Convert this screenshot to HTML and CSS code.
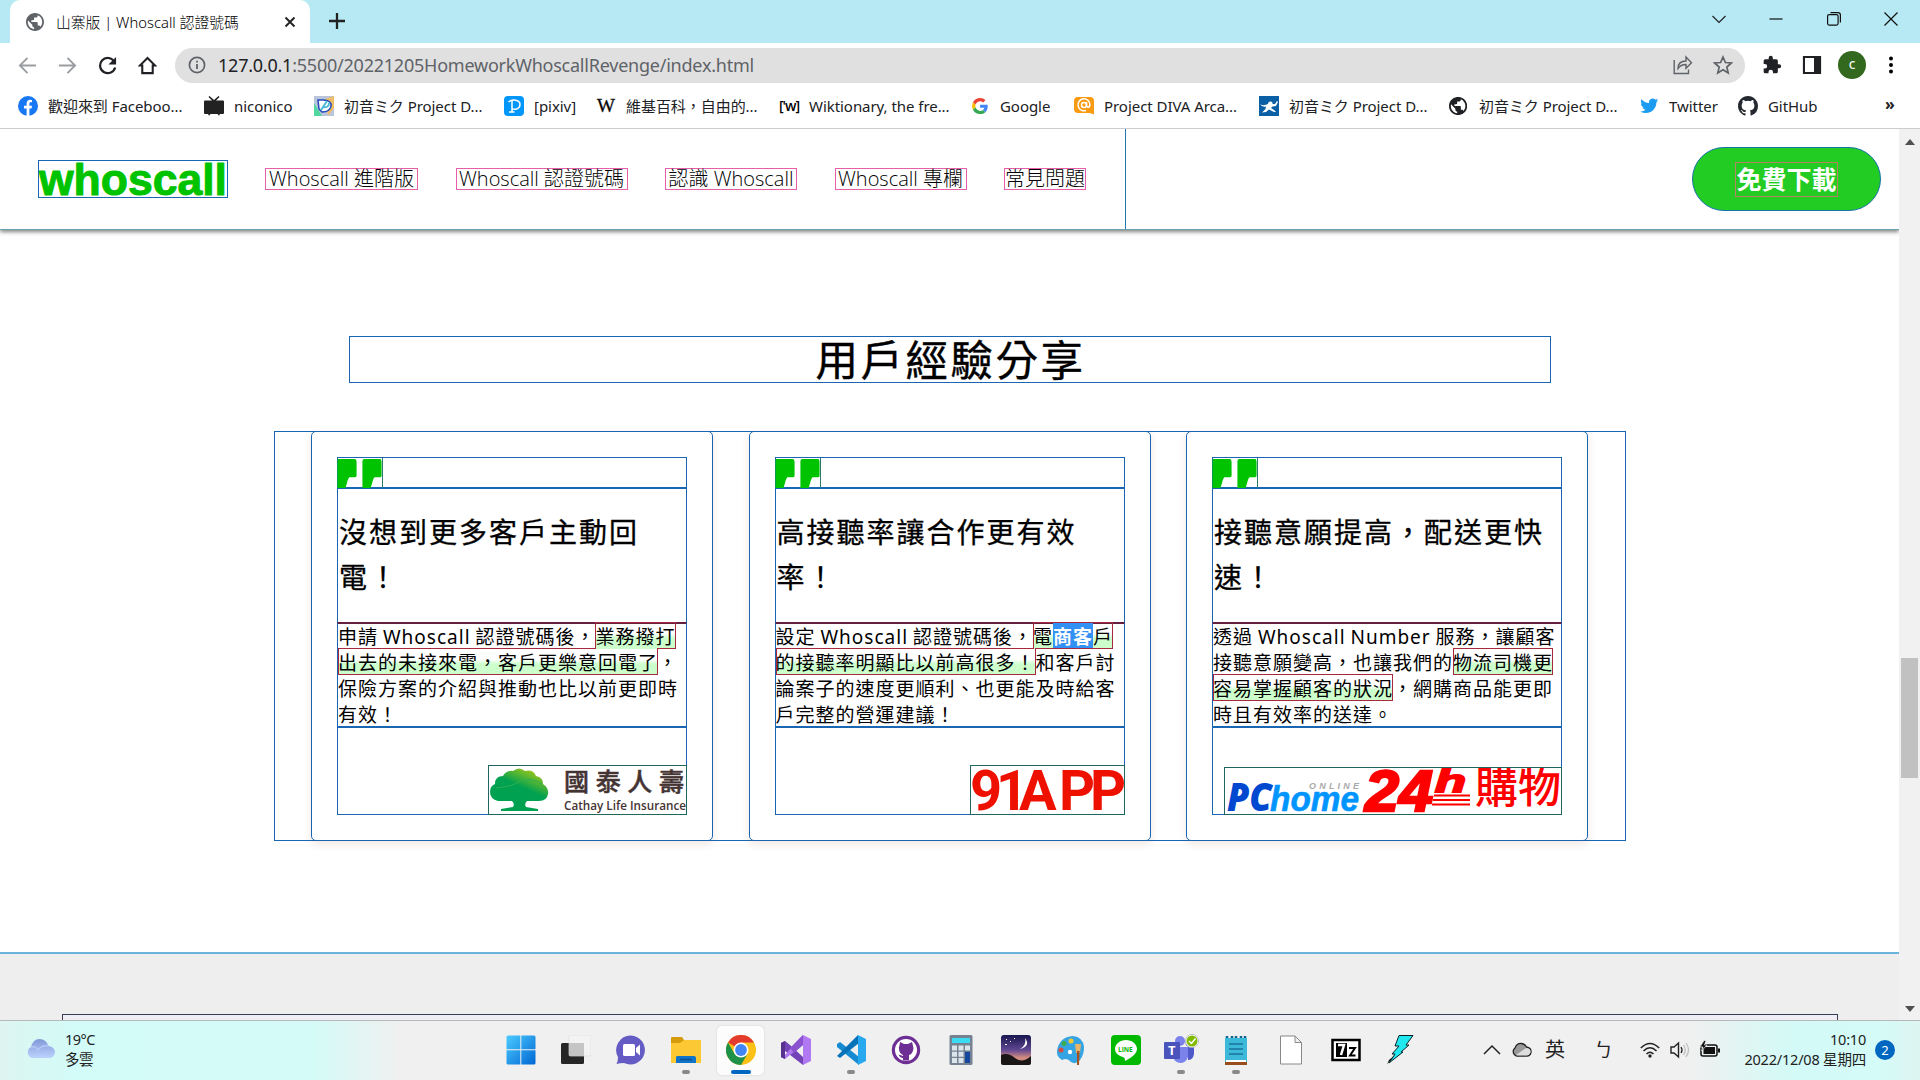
FILE: index.html
```html
<!DOCTYPE html>
<html lang="zh-Hant">
<head>
<meta charset="utf-8">
<title>山寨版 | Whoscall 認證號碼</title>
<link rel="stylesheet" href="styles.css">
</head>
<body>
<svg class="defs" width="0" height="0">
  <symbol id="globe" viewBox="2 2 20 20"><path fill="currentColor" d="M12 2C6.480 2 2 6.480 2 12s4.480 10 10 10 10-4.480 10-10S17.520 2 12 2zm-1 17.930c-3.950-.490-7-3.850-7-7.930 0-.620.080-1.210.210-1.790L9 15v1c0 1.100.9 2 2 2v1.930zm6.900-2.540c-.260-.810-1-1.390-1.900-1.390h-1v-3c0-.550-.450-1-1-1H8v-2h2c.550 0 1-.450 1-1V7h2c1.100 0 2-.9 2-2v-.410c2.930 1.190 5 4.060 5 7.410 0 2.080-.8 3.970-2.100 5.390z"/></symbol>
  <symbol id="quote" viewBox="0 0 46 31"><path d="M1 1H18Q20 1 20 5V18Q20 20 18 20H13Q11.500 20 10 26L8.500 31H0V4Q0 1 1 1ZM28 1H44Q46 1 46 5V18Q46 20 44 20H39Q37.500 20 36 26L34.500 31H26V4Q26 1 28 1Z" fill="#00c300"/></symbol>
</svg>

<div class="tabstrip">
  <div class="tab">
    <svg class="fav" viewBox="0 0 24 24"><use href="#globe"/></svg>
    <span class="tab-title">山寨版 | Whoscall 認證號碼</span>
    <svg class="tab-x" viewBox="0 0 12 12"><path d="M1.500 1.500L10.500 10.500M10.500 1.500L1.500 10.500" stroke="#222" stroke-width="1.900"/></svg>
  </div>
  <svg class="plus" viewBox="0 0 16 16"><path d="M8 0V16M0 8H16" stroke="#222" stroke-width="2.300"/></svg>
  <div class="winctl">
    <svg viewBox="0 0 14 14"><path d="M.5 4L7 10.500L13.500 4" fill="none" stroke="#222" stroke-width="1.200"/></svg>
    <svg viewBox="0 0 14 14"><path d="M.5 7H13.500" stroke="#111" stroke-width="1.200"/></svg>
    <svg viewBox="0 0 14 14"><rect x=".6" y="2.600" width="10.500" height="10.500" rx="1.500" fill="none" stroke="#111" stroke-width="1.200"/><path d="M3.500 .6H11Q13.400 .6 13.400 3V10.500" fill="none" stroke="#111" stroke-width="1.200"/></svg>
    <svg viewBox="0 0 14 14"><path d="M.5 .5L13.500 13.500M13.500 .5L.5 13.500" stroke="#111" stroke-width="1.200"/></svg>
  </div>
</div>

<div class="toolbar">
  <svg class="ti dim" viewBox="0 0 20 20"><path d="M19 10H2M10 2L2 10L10 18" fill="none" stroke="currentColor" stroke-width="2"/></svg>
  <svg class="ti dim" viewBox="0 0 20 20"><path d="M1 10H18M10 2L18 10L10 18" fill="none" stroke="currentColor" stroke-width="2"/></svg>
  <svg class="ti" viewBox="0 0 20 20"><path d="M16.800 5.500A8 8 0 1 0 18 12" fill="none" stroke="currentColor" stroke-width="2.300"/><path d="M19 1V9H11Z" fill="currentColor"/></svg>
  <svg class="ti" viewBox="0 0 20 20"><path d="M10 2L18 10H15.500V18H4.500V10H2Z" fill="none" stroke="currentColor" stroke-width="2.200"/></svg>
  <div class="omnibox">
    <svg class="info" viewBox="0 0 18 18"><circle cx="9" cy="9" r="7.600" fill="none" stroke="#5f6368" stroke-width="1.700"/><path d="M9 8V13M9 4.700V6.500" stroke="#5f6368" stroke-width="1.800"/></svg>
    <span class="url"><b>127.0.0.1</b>:5500/20221205HomeworkWhoscallRevenge/index.html</span>
    <svg class="oi" viewBox="0 0 20 20"><path d="M1.200 5V18.500H15.500V14.500M5 13.500C5 8.500 8 6 13 6V2L18.500 7.700L13 13.200V9.500C9.500 9.500 7 10.500 5 13.500Z" fill="none" stroke="#5f6368" stroke-width="1.400"/></svg>
    <svg class="oi" viewBox="0 0 20 20"><path d="M10 2L12.400 7.500L18.300 8L13.800 12L15.200 17.900L10 14.800L4.800 17.900L6.200 12L1.700 8L7.600 7.500Z" fill="none" stroke="#5f6368" stroke-width="1.700"/></svg>
  </div>
  <div class="exts">
    <svg viewBox="0 0 24 24"><path d="M20.500 11H19V7a2 2 0 0 0-2-2h-4V3.500a2.500 2.500 0 0 0-5 0V5H4a2 2 0 0 0-2 2v3.800h1.500a2.700 2.700 0 0 1 0 5.400H2V20a2 2 0 0 0 2 2h3.800v-1.500a2.700 2.700 0 0 1 5.400 0V22H17a2 2 0 0 0 2-2v-4h1.500a2.500 2.500 0 0 0 0-5z" fill="#202124"/></svg>
    <svg viewBox="0 0 20 20"><path d="M2 2H18V18H2Z" fill="#202124" stroke="#202124" stroke-width="2.200"/><rect x="3" y="3" width="9" height="14" fill="#fff"/></svg>
    <span class="avatar">c</span>
    <svg class="dots" viewBox="0 0 20 20"><circle cx="10" cy="3.500" r="2"/><circle cx="10" cy="10" r="2"/><circle cx="10" cy="16.500" r="2"/></svg>
  </div>
</div>

<div class="bookmarks">
  <span class="bm"><svg viewBox="0 0 20 20"><circle cx="10" cy="10" r="10" fill="#1877f2"/><path d="M8.600 20V12.500H6V9.700H8.600V7.600C8.600 5 10 3.700 12.300 3.700L14 3.900V6.300H12.800C11.700 6.300 11.400 7 11.400 7.800V9.700H14L13.500 12.500H11.400V20Z" fill="#fff"/></svg><i>歡迎來到 Faceboo...</i></span>
  <span class="bm"><svg viewBox="0 0 20 20"><path d="M1 4.500H8L4.500 1L5.500 0L10 4L14.500 0L15.500 1L12 4.500H19Q20 4.500 20 5.500V17Q20 18 19 18H16L15 19.800L13.500 18H6.500L5 19.800L4 18H1Q0 18 0 17V5.500Q0 4.500 1 4.500Z" fill="#222"/></svg><i>niconico</i></span>
  <span class="bm"><svg viewBox="0 0 20 20"><rect width="20" height="20" fill="#b9c5dd"/><path d="M0 7L8 20H0Z" fill="#51d7a0"/><path d="M11 3L20 0V12L14 20Z" fill="#eebd68"/><path d="M4 4H10Q18 5 17 10Q16 16 8 16L5 13Z" fill="#fff" stroke="#2349b8" stroke-width="1.500"/><path d="M7 14L13 5M9 11Q15 12 15 7" stroke="#4fb8d8" stroke-width="2" fill="none"/></svg><i>初音ミク Project D...</i></span>
  <span class="bm"><svg viewBox="0 0 20 20"><rect width="20" height="20" rx="4" fill="#0096fa"/><path d="M4.500 6C8 3 16 3.500 16 8.500C16 13.500 10 14 8 12.500M8 5V16M5 16H10.500" stroke="#fff" stroke-width="1.500" fill="none"/></svg><i>[pixiv]</i></span>
  <span class="bm"><b class="serif">W</b><i>維基百科，自由的...</i></span>
  <span class="bm"><b class="wik">['w]</b><i>Wiktionary, the fre...</i></span>
  <span class="bm"><svg viewBox="0 0 48 48"><g transform="translate(5 5) scale(.8)"><path fill="#ea4335" d="M24 9.500c3.500 0 6.700 1.200 9.200 3.600l6.900-6.900C35.900 2.400 30.500 0 24 0 14.600 0 6.500 5.400 2.600 13.200l8 6.200C12.400 13.700 17.700 9.500 24 9.500z"/><path fill="#4285f4" d="M47 24.500c0-1.600-.2-3.100-.4-4.500H24v9h12.900c-.6 3-2.200 5.500-4.800 7.200l7.700 6C44.400 38 47 31.800 47 24.500z"/><path fill="#fbbc05" d="M10.500 28.600c-.5-1.500-.8-3-.8-4.600s.3-3.100.8-4.600l-8-6.200C1 16.500 0 20.100 0 24s.9 7.500 2.600 10.800z"/><path fill="#34a853" d="M24 48c6.500 0 11.900-2.100 15.900-5.800l-7.700-6c-2.200 1.500-4.900 2.300-8.200 2.300-6.300 0-11.600-4.200-13.500-9.900l-8 6.200C6.500 42.600 14.600 48 24 48z"/></g></svg><i>Google</i></span>
  <span class="bm"><svg viewBox="0 0 20 20"><path d="M4 1H16Q20 1 20 5V18.500L16 17H4Q0 17 0 13V5Q0 1 4 1Z" fill="#f89a12"/><circle cx="10" cy="9" r="2.500" fill="none" stroke="#fff" stroke-width="1.500"/><path d="M12.500 6V10Q15 13 16 9A6 6 0 1 0 12 14.500" fill="none" stroke="#fff" stroke-width="1.500"/></svg><i>Project DIVA Arca...</i></span>
  <span class="bm"><svg viewBox="0 0 20 20"><rect width="20" height="20" fill="#0b5fa5"/><path d="M1 8C4 10 6 9 9 8Q9 5 12 5.500Q14 6 13.500 8L16 8L18 5L19 6L17 10L13.500 10.500L12 12L15 14L17 16L15 16L10 13.500L7 16L3 16.500L6.500 13L7 10.500Q3 11.500 1 8Z" fill="#fff"/></svg><i>初音ミク Project D...</i></span>
  <span class="bm"><svg class="dark" viewBox="0 0 22 22"><use href="#globe" x="0" y="1" width="20" height="20"/></svg><i>初音ミク Project D...</i></span>
  <span class="bm"><svg viewBox="0 0 24 24"><path fill="#1d9bf0" d="M23 5.100a9 9 0 0 1-2.500.7 4.400 4.400 0 0 0 1.900-2.400 9 9 0 0 1-2.800 1 4.400 4.400 0 0 0-7.500 4A12.500 12.500 0 0 1 3 3.800a4.400 4.400 0 0 0 1.400 5.900 4.400 4.400 0 0 1-2-.6 4.400 4.400 0 0 0 3.500 4.400 4.400 4.400 0 0 1-2 .1 4.400 4.400 0 0 0 4.100 3A9 9 0 0 1 1.500 18.500a12.500 12.500 0 0 0 6.800 2C16.500 20.500 21 13.700 21 7.300A9 9 0 0 0 23 5.100z"/></svg><i>Twitter</i></span>
  <span class="bm"><svg viewBox="0 0 16 16"><path fill="#24292f" d="M8 0C3.580 0 0 3.580 0 8c0 3.540 2.290 6.530 5.470 7.590.4.070.55-.17.55-.38 0-.19-.01-.82-.01-1.490-2.010.37-2.530-.49-2.690-.94-.09-.23-.48-.94-.82-1.130-.28-.15-.68-.52-.01-.53.63-.01 1.080.58 1.230.82.72 1.210 1.870.87 2.330.66.07-.52.28-.87.51-1.070-1.780-.2-3.640-.89-3.640-3.950 0-.87.31-1.590.82-2.150-.08-.2-.36-1.020.08-2.120 0 0 .67-.21 2.200.82a7.600 7.600 0 0 1 4 0c1.530-1.040 2.200-.82 2.200-.82.44 1.100.16 1.920.08 2.120.51.56.82 1.270.82 2.150 0 3.070-1.870 3.750-3.650 3.950.29.25.54.73.54 1.480 0 1.070-.01 1.930-.01 2.200 0 .21.15.46.55.38A8 8 0 0 0 16 8c0-4.420-3.580-8-8-8z"/></svg><i>GitHub</i></span>
  <b class="more">»</b>
</div>

<div class="viewport">
  <main class="page">
    <header class="site">
      <div class="left">
        <svg class="logo" viewBox="0 0 188 36"><text x="0" y="33.500" textLength="188" lengthAdjust="spacingAndGlyphs">whoscall</text></svg>
        <nav>
          <a>Whoscall 進階版</a><a>Whoscall 認證號碼</a><a>認識 Whoscall</a><a>Whoscall 專欄</a><a>常見問題</a>
        </nav>
      </div>
      <div class="download"><span>免費下載</span></div>
    </header>

    <section class="stories">
      <h2>用戶經驗分享</h2>
      <div class="cards">
        <article>
          <div class="q"><svg viewBox="0 0 46 31"><use href="#quote"/></svg></div>
          <h3>沒想到更多客戶主動回<br>電！</h3>
          <p>申請 Whoscall 認證號碼後，<em>業務撥打<br>出去的未接來電，客戶更樂意回電了</em>，<br>保險方案的介紹與推動也比以前更即時<br>有效！</p>
          <div class="brand">
            <svg width="199" height="50" viewBox="0 0 197 48"><defs><linearGradient id="tree" x1="0" y1="1" x2=".6" y2="0"><stop offset=".65" stop-color="#00a150"/><stop offset="1" stop-color="#8fc31f"/></linearGradient></defs><path d="M9 35Q1 33 1 26Q1 20 6 18Q6 10 14 10Q17 4 24 5Q30 0 36 5Q44 3 47 10Q54 11 54 18Q60 22 59 28Q58 35 50 35H38Q35 38 37 41L49 43V45H12V43L24 41Q26 38 23 35Z" fill="url(#tree)"/><path d="M7 22Q21 21 30 16Q42 10 53 18" stroke="#2db052" stroke-width="1" fill="none"/><text class="ca1" x="75" y="25" textLength="120">國泰人壽</text><text class="ca2" x="75" y="44" textLength="122" lengthAdjust="spacingAndGlyphs">Cathay Life Insurance</text></svg>
          </div>
        </article>
        <article>
          <div class="q"><svg viewBox="0 0 46 31"><use href="#quote"/></svg></div>
          <h3>高接聽率讓合作更有效<br>率！</h3>
          <p>設定 Whoscall 認證號碼後，<em>電<mark>商客</mark>戶<br>的接聽率明顯比以前高很多！</em>和客戶討<br>論案子的速度更順利、也更能及時給客<br>戶完整的營運建議！</p>
          <div class="brand">
            <svg width="155" height="50" viewBox="0 0 153 48"><text class="app" y="43.500" x="-1 25 48 88 119">91APP</text></svg>
          </div>
        </article>
        <article>
          <div class="q"><svg viewBox="0 0 46 31"><use href="#quote"/></svg></div>
          <h3>接聽意願提高，配送更快<br>速！</h3>
          <p>透過 Whoscall Number 服務，讓顧客<br>接聽意願變高，也讓我們的<em>物流司機更<br>容易掌握顧客的狀況</em>，網購商品能更即<br>時且有效率的送達。</p>
          <div class="brand">
            <svg width="338" height="48" viewBox="0 0 336 46"><text class="pc" x="2" y="43" textLength="45" lengthAdjust="spacingAndGlyphs">PC</text><text class="home" x="45" y="43" textLength="89" lengthAdjust="spacingAndGlyphs">home</text><text class="online" x="84" y="21" textLength="50">ONLINE</text><text class="h24" x="140" y="42.500" textLength="68" lengthAdjust="spacingAndGlyphs">24</text><text class="hh" x="210" y="24" textLength="31" lengthAdjust="spacingAndGlyphs">h</text><path d="M209 27.500H245M208 32H245M207 36.500H245" stroke="#f00" stroke-width="1.800"/><text class="gw" x="250" y="35" textLength="86">購物</text></svg>
          </div>
        </article>
      </div>
    </section>
    <section class="gray"><div class="inner"></div></section>
  </main>
  <div class="scroll">
    <svg viewBox="0 0 10 6"><path d="M0 6L5 0L10 6Z"/></svg>
    <div class="thumb"></div>
    <svg viewBox="0 0 10 6"><path d="M0 0L5 6L10 0Z"/></svg>
  </div>
</div>

<footer class="taskbar">
  <div class="weather">
    <svg viewBox="0 0 30 20"><defs><linearGradient id="cl" x1="0" y1="0" x2="0" y2="1"><stop offset="0" stop-color="#8298d8"/><stop offset="1" stop-color="#bcd2fd"/></linearGradient></defs><path d="M7 19A6 6 0 0 1 6 8Q8 0 14.500 0Q21 0 23.500 7Q30 8 30 13.500Q29 19 24 19Z" fill="url(#cl)"/><path d="M6 8Q11 7 13 11Q17 6 23.500 7" fill="none" stroke="#b4c6f4" stroke-width="1.500"/></svg>
    <div class="wt"><span>19°C</span><span>多雲</span></div>
  </div>
  <div class="apps">
    <span class="app-i"><svg viewBox="0 0 30 30"><defs><linearGradient id="win" x1="0" y1="0" x2="1" y2="1"><stop offset="0" stop-color="#4ccbff"/><stop offset="1" stop-color="#0067d4"/></linearGradient></defs><path d="M.5 2Q.5 .5 2 .5H14.300V14.300H.5ZM15.300 .5H28Q29.500 .5 29.500 2V14.300H15.300ZM.5 15.300H14.300V29.500H2Q.5 29.500 .5 28ZM15.300 15.300H29.500V28Q29.500 29.500 28 29.500H15.300Z" fill="url(#win)"/></svg></span>
    <span class="app-i"><svg viewBox="0 0 30 30"><rect x="0" y="8" width="23" height="21" rx="1.500" fill="#262626"/><rect x="8" y="0" width="22" height="21" rx="1.500" fill="#f4f4f4" fill-opacity=".8" stroke="#ddd" stroke-width=".7"/><path d="M8 8H23V21H8Z" fill="#c5c5c5"/></svg></span>
    <span class="app-i"><svg viewBox="0 0 30 30"><path d="M15 .5A14.500 14.500 0 1 1 8 28Q4 28 .5 29Q2 26 2 22A14.500 14.500 0 0 1 15 .5Z" fill="#655bc4"/><rect x="7" y="9" width="12" height="12" rx="1.500" fill="#fff"/><path d="M20 13L24 9.500V20.500L20 17Z" fill="#fff"/></svg></span>
    <span class="app-i run"><svg viewBox="0 0 30 30"><path d="M0 3Q0 2 1 2H11L13 5H15V10H0Z" fill="#d59b0c"/><path d="M0 8H9L13 5H30V28H0Z" fill="#fcc934"/><path d="M5 28V22Q5 21 7 21H23Q25 21 25 23V28Z" fill="#0f74c8"/><path d="M9 24.500H21" stroke="#0b4f92" stroke-width="1.500"/></svg></span>
    <span class="app-i active"><svg viewBox="0 0 30 30"><circle cx="15" cy="15" r="15" fill="#fbc116"/><path d="M15 15L2 7.500A15 15 0 0 1 28 7.500H15Z" fill="#e33b2e"/><path d="M2 7.500A15 15 0 0 0 15 30L21.500 18.700L8.500 18.700Z" fill="#1e9248"/><circle cx="15" cy="15" r="7.500" fill="#fff"/><circle cx="15" cy="15" r="5.900" fill="#4285f4"/></svg></span>
    <span class="app-i"><svg viewBox="0 0 30 30"><path d="M0 8L4 6L9 10L22 22V30L4 16L4 24L0 22Z" fill="#7443b8"/><path d="M4 24L0 22L4 20L17 5L22 0L30 4V26L22 30V10L9 20Z" fill="#b179f1"/><path d="M22 0V10L13 18L9 13Z" fill="#8a52cf"/><path d="M0 8L4 6V24L0 22Z" fill="#57318e"/></svg></span>
    <span class="app-i run"><svg viewBox="0 0 30 30"><path d="M1 9L4 7L23 22V30L1 12Z" fill="#168bd2"/><path d="M1 21L22 0L23 8L4 23L1 21Z" fill="#0872b9"/><path d="M22 0L30 4V26L22 30Z" fill="#28a8ef"/></svg></span>
    <span class="app-i"><svg viewBox="0 0 30 30"><circle cx="15" cy="15" r="14.200" fill="#6d2f94"/><circle cx="15" cy="15" r="11" fill="#fff"/><path d="M9 7L13 9H17L21 7L22 11Q23 13 22 16Q21 19 18 20V25.500H12V23Q9 23 7.500 19.500Q10 20 12 21V20Q8 18 8 14Q7.500 12 8.500 10.500Z" fill="#6d2f94"/></svg></span>
    <span class="app-i"><svg viewBox="0 0 30 30"><rect x="3.500" width="23" height="30" rx="1.500" fill="#768292"/><path d="M6 3H24V8H6Z" fill="#3bdbf3"/><path d="M6 10.500h5v5H6zM12.500 10.500h5v5h-5zM19 10.500h5v5h-5zM6 16.800h5v5H6zM12.500 16.800h5v5h-5zM6 23h5v5H6zM12.500 23h5v5h-5z" fill="#dce4ec"/><path d="M19 16.800h5V28h-5z" fill="#16479e"/></svg></span>
    <span class="app-i"><svg viewBox="0 0 30 30"><defs><linearGradient id="night" x1="0" y1="0" x2="0" y2="1"><stop offset="0" stop-color="#17164f"/><stop offset=".5" stop-color="#614793"/><stop offset=".75" stop-color="#d08a80"/></linearGradient></defs><rect width="30" height="30" rx="3" fill="url(#night)"/><path d="M0 20Q7 17 14 23T30 21V28Q30 30 28 30H2Q0 30 0 28Z" fill="#191615"/><path d="M24 3Q30 11 19 14Q26 10 24 3Z" fill="#fff"/><path d="M5 4h1v1H5zM9 6h1v1H9zM4 9h2v1H4zM13 3h1v1h-1z" fill="#fff"/></svg></span>
    <span class="app-i"><svg viewBox="0 0 30 30"><path d="M1 16Q3 2 17 1Q27 2 28 12Q28 20 24 25Q20 30 15 27Q11 22 6 25Q0 21 1 16Z" fill="#34a4e2"/><circle cx="5" cy="15" r="2.500" fill="#d94c40"/><circle cx="8" cy="8.500" r="2.500" fill="#3cac4c"/><circle cx="15" cy="6" r="2.500" fill="#f5c831"/><circle cx="14" cy="17" r="2.200" fill="#fff"/><path d="M19 9H25L24 18H20Z" fill="#e7b36b"/><path d="M21 16H23.500L23 30H21Z" fill="#a35222"/></svg></span>
    <span class="app-i"><svg viewBox="0 0 30 30"><rect width="30" height="30" rx="4" fill="#00b900"/><path d="M15 5C9 5 4 9 4 14Q4 20 13 22.500Q14 23 14 26Q26 20 26 14C26 9 21 5 15 5Z" fill="#fff"/><text class="line-t" x="7" y="16.500">LINE</text></svg></span>
    <span class="app-i run"><svg class="wide" viewBox="0 0 36 32"><circle cx="17" cy="7" r="5" fill="#7b83eb"/><circle cx="26" cy="9" r="3.500" fill="#5059c9"/><path d="M10 13H25V23Q23 29 17 29Q11 28 10 23Z" fill="#7b83eb"/><path d="M25 13H31V20Q30 26 25 26Z" fill="#5059c9"/><rect x="1" y="8" width="16" height="17" rx="1" fill="#4b53bc"/><text class="team-t" x="5" y="21">T</text><circle cx="29" cy="7" r="6.600" fill="#fff" stroke="#aab" stroke-width=".7"/><circle cx="29" cy="7" r="5.500" fill="#7fba00"/><path d="M26 7L28.500 9.500L32.500 4.500" fill="none" stroke="#fff" stroke-width="1.500"/></svg></span>
    <span class="app-i run"><svg viewBox="0 0 30 30"><path d="M4 3H26V27H4Z" fill="#3cb8d8"/><path d="M4 27H26V30H4Z" fill="#994d1d"/><path d="M5 25H25V27H5Z" fill="#fff"/><path d="M6 1v2M11 1v2M15 1v2M20 1v2M24 1v2" stroke="#12618a" stroke-width="2.500"/><path d="M8 9H22M8 14H22M8 19H22" stroke="#19749c" stroke-width="1.500"/></svg></span>
    <span class="app-i"><svg viewBox="0 0 30 30"><path d="M4.500 1H19L25.500 7.500V29H4.500ZM19 1V7.500H25.500" fill="#fff" stroke="#888" stroke-width="1"/></svg></span>
    <span class="app-i"><svg viewBox="0 0 30 30"><rect x="1.500" y="5" width="27" height="20" fill="#fff" stroke="#000" stroke-width="2.500"/><rect x="5" y="8" width="11" height="14" fill="#000"/><path d="M7 10H13L10 20" fill="none" stroke="#fff" stroke-width="2.500"/><path d="M18 13H24L19 20.500H24.500" fill="none" stroke="#000" stroke-width="2"/></svg></span>
    <span class="app-i"><svg viewBox="0 0 30 30"><path d="M13 .5H27L20 10H23L15 17H17L3 28L9 19H6L13 11H9Z" fill="#1fe9ef" stroke="#0a2226" stroke-width="1"/><path d="M8 21L1 29.500L3 25Z" fill="#000"/></svg></span>
  </div>
  <div class="tray">
    <svg viewBox="0 0 20 20"><path d="M2 14L10 6L18 14" fill="none" stroke="#222" stroke-width="1.500"/></svg>
    <svg viewBox="0 0 20 20"><path d="M5 16A4.500 4.500 0 0 1 3 8Q5 3 9.500 3.500Q13 4 14.500 7Q19.500 8 19 12.500Q18 16 15 16Z" fill="#999" stroke="#222" stroke-width="1.300"/><path d="M4 15L14 8Q19 8 18.500 12.500Q17 15.500 15 15.500H5Z" fill="#ddd"/></svg>
    <span class="ime">英</span><span class="ime bpmf">ㄅ</span>
    <svg viewBox="0 0 20 20"><path d="M.8 8Q10-1 19.200 8M3.500 11Q10 4.500 16.500 11M6.500 14Q10 10.500 13.500 14" fill="none" stroke="#222" stroke-width="1.500"/><circle cx="10" cy="16" r="1.700" fill="#222"/></svg>
    <svg viewBox="0 0 20 20"><path d="M1 7H4L8.500 3V17L4 13H1Z" fill="none" stroke="#222" stroke-width="1.400"/><path d="M11 7Q13 10 11 13" stroke="#222" stroke-width="1.300" fill="none"/><path d="M13.500 5Q17 10 13.500 15M16 3Q21 10 16 17" stroke="#bbb" stroke-width="1.200" fill="none"/></svg>
    <svg viewBox="0 0 20 20"><rect x="1" y="5" width="16" height="11" rx="2" fill="none" stroke="#111" stroke-width="1.500"/><rect x="3.500" y="7" width="11.500" height="7" fill="#111"/><path d="M18 8.500H20V12.500H18Z" fill="#111"/><path d="M4 .5L0 7H3L1.500 11L7 5H4.500L6 .5Z" fill="#111" stroke="#f0f0f0" stroke-width=".7"/></svg>
    <div class="clock"><span>10:10</span><span class="date">2022/12/08 星期四</span></div>
    <span class="badge">2</span>
  </div>
</footer>
</body>
</html>
```
FILE: styles.css
```css
* { box-sizing: border-box; }
body {
  margin: 0;
  width: 1920px;
  height: 1080px;
  overflow: hidden;
  display: flex;
  flex-direction: column;
  background: #fff;
  color: #000;
  font-family: "Noto Sans", "Noto Sans CJK TC", sans-serif;
}
svg { display: block; flex: none; }
.defs { display: none; }

/* window title bar */
.tabstrip {
  height: 43px;
  flex: none;
  background: #b6e9f3;
  display: flex;
  padding-left: 10px;
}
.tab {
  width: 300px;
  background: #fff;
  border-radius: 10px 10px 0 0;
  display: flex;
  align-items: center;
  padding: 0 14px 0 16px;
}
.fav { width: 18px; height: 18px; color: #5f6368; }
.tab-title {
  margin-left: 12px;
  flex: 1;
  white-space: nowrap;
  font-size: 14.8px;
  font-weight: 300;
}
.tab-x { width: 12px; height: 12px; }
.plus { width: 16px; height: 16px; margin: 13px 0 0 19px; }
.winctl {
  margin-left: auto;
  display: flex;
  gap: 43.500px;
  padding: 12px 22px 0 0;
}
.winctl svg { width: 14px; height: 14px; }

/* address bar */
.toolbar {
  height: 46px;
  flex: none;
  display: flex;
  align-items: center;
  padding-left: 18px;
  padding-bottom: 2px;
}
.ti { width: 19px; height: 19px; margin-right: 21px; color: #202124; }
.ti.dim { color: #9a9da1; }
.omnibox {
  margin-left: -3px;
  width: 1570px;
  height: 35px;
  border-radius: 18px;
  background: #e0e0e0;
  display: flex;
  align-items: center;
  padding: 0 12px 0 13px;
}
.info { width: 18px; height: 18px; margin-right: 12px; }
.url {
  flex: 1;
  margin-top: -1px;
  font-size: 18px;
  letter-spacing: -.23px;
  color: #5f6368;
}
.url b { font-weight: 400; color: #202124; }
.oi { width: 20px; height: 20px; margin-left: 20px; }
.exts {
  display: grid;
  grid-template-columns: 40px 36px 43px 20px;
  align-items: center;
  margin-left: 17px;
}
.exts svg { width: 20px; height: 20px; }
.avatar {
  width: 28px;
  height: 28px;
  border-radius: 50%;
  background: #33691e;
  color: #fff;
  font-size: 14px;
  line-height: 26px;
  text-align: center;
}
.bookmarks {
  height: 40px;
  flex: none;
  border-bottom: 1px solid #c9cbce;
  display: grid;
  grid-template-columns: 186px 110px 190px 92px 183px 191px 104px 185px 190px 190px 99px 147px 20px;
  padding: 0 0 6px 18px;
  align-items: center;
}
.bm { display: flex; align-items: center; gap: 10px; white-space: nowrap; }
.bm svg { width: 20px; height: 20px; }
.bm .dark { color: #202124; }
.bm i {
  font-style: normal;
  font-size: 15px;
  letter-spacing: -.05px;
  color: #202124;
}
.bm b { width: 20px; text-align: center; }
.serif { font: 400 19px/20px "Liberation Serif", serif; -webkit-text-stroke: .4px #222; }
.wik { font: 600 14px/20px "Open Sans", sans-serif; letter-spacing: -1px; }
.more { font-size: 16px; line-height: 18px; color: #222; margin-top: -3px; }

/* page */
.viewport { flex: 1; min-height: 0; display: flex; }
.page { width: 1899px; overflow: hidden; display: flex; flex-direction: column; }
.site {
  height: 101px;
  flex: none;
  display: flex;
  justify-content: space-between;
  border-bottom: 1px solid #6fa0b0;
  box-shadow: 0 2px 4px rgba(80, 80, 70, .7);
}
.left {
  width: 1126px;
  border-right: 1px solid #1f78b0;
  display: flex;
  align-items: flex-start;
  padding: 31px 0 0 38px;
}
.logo { width: 190px; height: 38px; border: 1px solid #1b66b3; }
.logo text {
  font: 700 45px "Liberation Sans", sans-serif;
  fill: #00c300;
  stroke: #00c300;
  stroke-width: 1px;
  stroke-linejoin: round;
}
nav {
  display: grid;
  grid-template-columns: 153px 172px 132px 132px 82px;
  column-gap: 37.500px;
  margin: 8px 0 0 37px;
}
nav a {
  height: 22px;
  border: 1px solid #e65fa8;
  font-family: "Open Sans", "Noto Sans CJK TC", sans-serif;
  font-weight: 300;
  font-size: 20px;
  line-height: 20px;
  text-align: center;
  white-space: nowrap;
}
.download {
  margin: 18px 18px 0 0;
  width: 189px;
  height: 64px;
  border: 1px solid #1474a8;
  border-radius: 32px;
  background: #22cc22;
  display: flex;
  align-items: center;
  justify-content: center;
}
.download span {
  border: 1px solid #b98263;
  height: 35px;
  font: 700 25px/30px "Noto Sans CJK TC", sans-serif;
  color: #fff;
}
.stories { height: 722px; flex: none; padding: 106px 0 0 1px; }
h2 {
  width: 1202px;
  height: 47px;
  margin: 0 auto 48px;
  border: 1px solid #1b66b3;
  text-align: center;
  font-weight: 400;
  font-size: 42.500px;
  letter-spacing: 2.500px;
  line-height: 45px;
  padding-left: 1px;
  -webkit-text-stroke: .4px #000;
}
.cards {
  width: 1352px;
  height: 410px;
  margin: 0 auto;
  padding: 0 37px 0 36px;
  border: 1px solid #1b66b3;
  display: grid;
  grid-template-columns: repeat(3, 402px);
  justify-content: space-between;
}
article {
  margin-top: -1px;
  height: 410px;
  border: 1px solid #1b66b3;
  border-radius: 5px;
  box-shadow: 0 3px 8px rgba(120, 60, 20, .12);
  padding: 25px;
}
.q { height: 31px; border: 1px solid #1b66b3; }
.q svg { width: 46px; height: 30px; margin-left: -1px; border-right: 1px solid #2b7a6b; }
h3 {
  margin: 0;
  height: 134px;
  border: 1px solid #1b66b3;
  border-bottom: 0;
  padding: 21px 0 0 1px;
  font-weight: 400;
  font-size: 28px;
  letter-spacing: 2px;
  line-height: 45px;
  white-space: nowrap;
  -webkit-text-stroke: .3px #000;
}
p {
  margin: 0;
  height: 106px;
  border: solid #1b66b3;
  border-width: 2px 1px;
  border-top-color: #66203f;
  font-size: 19px;
  letter-spacing: 1px;
  word-spacing: -1px;
  line-height: 26px;
  white-space: nowrap;
}
em {
  font-style: normal;
  font-family: "Noto Sans CJK TC", sans-serif;
  line-height: 0;
  outline: 1px solid #a8283e;
  outline-offset: -1px;
  background: linear-gradient(transparent 42%, #cfc 60%);
}
mark { background: #3390f4; color: #fff; font-weight: 700; }
.brand {
  height: 87px;
  border: 1px solid #1b66b3;
  border-top: 0;
  display: flex;
  justify-content: flex-end;
  align-items: flex-end;
}
.brand svg { border: 1px solid #1f6660; margin: 0 -1px -1px 0; }
.ca1 { font: 500 25px "Noto Sans CJK TC", sans-serif; fill: #433; stroke: #433; stroke-width: .5px; }
.ca2 { font: 600 13px "Open Sans", sans-serif; fill: #433; }
.app { font: 700 56px Roboto, sans-serif; fill: #ee1100; }
.pc { font: italic 800 38px "Open Sans", sans-serif; fill: #0048d0; }
.home { font: italic 700 35px "Liberation Sans", sans-serif; fill: #0094ff; stroke: #0094ff; stroke-width: .6px; }
.online { font: italic 600 9px "Liberation Sans", sans-serif; fill: #aaa; }
.h24, .hh { font: italic 700 58px "Liberation Sans", sans-serif; fill: #f00; stroke: #f00; stroke-width: 2.500px; }
.hh { font-size: 31px; stroke-width: 1.800px; }
.gw { font: 500 43px "Noto Sans CJK TC", sans-serif; fill: #f00; }
.gray {
  flex: 1;
  border-top: 2px solid #6ab3dc;
  background: #eee;
  padding: 60px 61px 0 62px;
}
.inner { height: 20px; border: 1px solid #3a3d58; background: #eeeef4; }
.scroll {
  width: 21px;
  background: #f1f1f1;
  display: flex;
  flex-direction: column;
  align-items: center;
  padding: 10px 0 8px;
}
.scroll svg { width: 10px; height: 6px; fill: #505050; }
.thumb { width: 17px; height: 120px; background: #c1c1c1; margin: 513px 0 auto; }

/* taskbar */
.taskbar {
  height: 60px;
  flex: none;
  border-top: 1px solid #b5b9ba;
  background: linear-gradient(90deg, #def5f1, #d3fbf7 70px, #d4fbf7 310px, #f0f0f0 400px, #f0f0f0 1690px, #d3faf6 1790px, #d5fbf8 1880px, #def5f1);
  display: flex;
  align-items: center;
  padding-bottom: 1px;
  color: #222;
}
.weather { width: 493px; padding-left: 25px; display: flex; align-items: center; gap: 10px; }
.weather svg { width: 30px; height: 20px; margin-top: -2px; }
.wt, .clock {
  display: flex;
  flex-direction: column;
  font-size: 14.500px;
  line-height: 20px;
  letter-spacing: -.2px;
  padding-bottom: 3px;
}
.wt { letter-spacing: -.5px; }
.apps { display: grid; grid-template-columns: repeat(17, 55.060px); width: 936px; }
.app-i {
  width: 47px;
  height: 49px;
  margin: 0 auto;
  border-radius: 5px;
  display: grid;
  grid-template-rows: 39px 4px;
  padding-top: 5px;
  place-items: center;
}
.app-i svg { width: 30px; height: 30px; }
.app-i .wide { width: 36px; height: 32px; }
.active { background: #fcfcfc; box-shadow: 0 0 2px #ccc; }
.run::after, .active::after { content: ""; width: 8px; height: 4px; border-radius: 2px; background: #888; }
.active::after { width: 20px; background: #0067c0; }
.line-t { font: 700 6.500px "Open Sans", sans-serif; fill: #00b900; }
.team-t { font: 700 13px "Open Sans", sans-serif; fill: #fff; }
.tray {
  display: grid;
  grid-template-columns: 30px 33px 49px 46px 30px 30px 30px 145px 20px;
  align-items: center;
  margin-left: 53px;
}
.tray svg { width: 20px; height: 20px; }
.ime { font-size: 20px; line-height: 24px; }
.bpmf { font-size: 19px; }
.clock { align-items: flex-end; padding-right: 9px; }
.badge {
  width: 20px;
  height: 20px;
  border-radius: 50%;
  background: #0067c0;
  color: #fff;
  font-size: 13px;
  line-height: 20px;
  text-align: center;
}
```
